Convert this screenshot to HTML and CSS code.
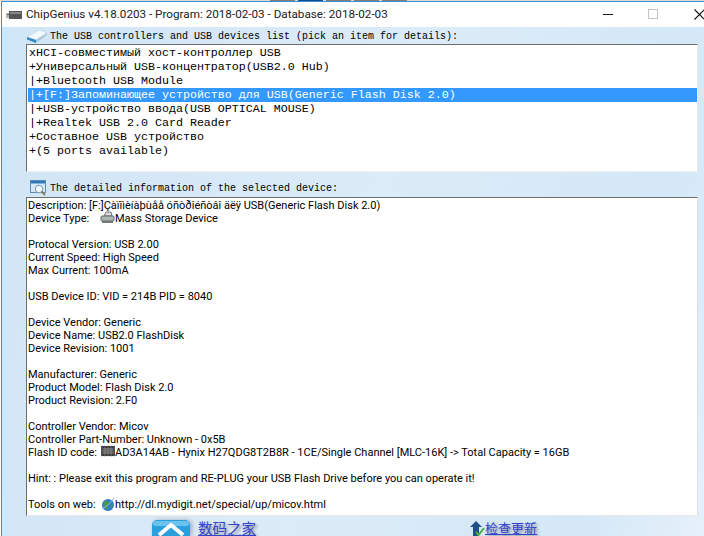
FILE: index.html
```html
<!DOCTYPE html>
<html lang="en">
<head>
<meta charset="utf-8">
<title>ChipGenius</title>
<link rel="stylesheet" href="styles.css">
</head>
<body>
<div class="taskstrip"><i class="seg"></i><i class="seg active"></i><i class="seg"></i><i class="seg"></i><i class="seg"></i></div>
<div class="window">
  <header class="titlebar">
    <svg class="appicon" width="16" height="10" viewBox="0 0 16 10"><rect x="0" y="3" width="3" height="5" fill="#b5b5b5"/><rect x="3" y="1" width="13" height="8" fill="#555"/><rect x="4" y="2" width="11" height="2" fill="#888"/><rect x="1" y="4" width="2" height="1" fill="#666"/></svg>
    <span class="title">ChipGenius v4.18.0203 - Program: 2018-02-03 - Database: 2018-02-03</span>
    <div class="controls">
      <span class="minimize"></span>
      <span class="maximize"></span>
      <svg class="close" width="11" height="11" viewBox="0 0 11 11"><path d="M0.5 .5 L10.5 10.5 M10.5 .5 L.5 10.5" stroke="#111" stroke-width="1.1" fill="none"/></svg>
    </div>
  </header>
  <main class="client">
    <div class="label first">
      <svg class="usbicon" width="22" height="14" viewBox="0 0 22 14"><path d="M1 8 L13 1 L21 4 L10 11 Z" fill="#f2f8fc" stroke="#c4dcec" stroke-width=".8"/><path d="M1 8 L10 11 L10 14 L1 10.500 Z" fill="#2f86c6"/><path d="M10 11 L21 4 L21 6 L10 14 Z" fill="#a9c8dc"/></svg>
      <span class="labeltext">The USB controllers and USB devices list (pick an item for details):</span>
    </div>
    <ul class="devices">
      <li>xHCI-совместимый хост-контроллер USB</li>
      <li>+Универсальный USB-концентратор(USB2.0 Hub)</li>
      <li>|+Bluetooth USB Module</li>
      <li class="selected">|+[F:]Запоминающее устройство для USB(Generic Flash Disk 2.0)</li>
      <li>|+USB-устройство ввода(USB OPTICAL MOUSE)</li>
      <li>|+Realtek USB 2.0 Card Reader</li>
      <li>+Составное USB устройство</li>
      <li>+(5 ports available)</li>
    </ul>
    <div class="label second">
      <svg class="infoicon" width="17" height="16" viewBox="0 0 17 16"><rect x=".5" y=".5" width="15" height="12" fill="#d6e8f5" stroke="#5b8db8"/><rect x="1" y="1" width="14" height="2.500" fill="#2f78b8"/><circle cx="9" cy="9" r="3.800" fill="#eef6fb" stroke="#7d9bb0"/><path d="M11.500 11.500 L15 15" stroke="#8a7a55" stroke-width="1.800"/></svg>
      <span class="labeltext">The detailed information of the selected device:</span>
    </div>
    <div class="details">
      <p>Description: [F:]Çàïîìèíàþùåå óñòðîéñòâî äëÿ USB(Generic Flash Disk 2.0)</p>
      <p><span class="key">Device Type:</span><svg class="inl" width="15" height="13" viewBox="0 0 15 13"><path d="M4 5 L6 1 H11 L12 5 Z" fill="#ddd" stroke="#777"/><rect x="1" y="5" width="13" height="5" rx="1" fill="#a9b5ad" stroke="#667"/><rect x="2" y="10" width="11" height="2" fill="#777"/></svg>Mass Storage Device</p>
      <p>&nbsp;</p>
      <p>Protocal Version: USB 2.00</p>
      <p>Current Speed: High Speed</p>
      <p>Max Current: 100mA</p>
      <p>&nbsp;</p>
      <p>USB Device ID: VID = 214B PID = 8040</p>
      <p>&nbsp;</p>
      <p>Device Vendor: Generic</p>
      <p>Device Name: USB2.0 FlashDisk</p>
      <p>Device Revision: 1001</p>
      <p>&nbsp;</p>
      <p>Manufacturer: Generic</p>
      <p>Product Model: Flash Disk 2.0</p>
      <p>Product Revision: 2.F0</p>
      <p>&nbsp;</p>
      <p>Controller Vendor: Micov</p>
      <p>Controller Part-Number: Unknown - 0x5B</p>
      <p><span class="key">Flash ID code:</span><svg class="inl" width="15" height="12" viewBox="0 0 15 12"><rect x="1" y="1" width="14" height="10" fill="#333"/><rect x="3" y="3" width="10" height="6" fill="#666"/><path d="M2 0V12M5 0V12M8 0V12M11 0V12M14 0V12" stroke="#999" stroke-width=".6"/></svg>AD3A14AB - Hynix H27QDG8T2B8R - 1CE/Single Channel [MLC-16K] -&gt; Total Capacity = 16GB</p>
      <p>&nbsp;</p>
      <p>Hint: : Please exit this program and RE-PLUG your USB Flash Drive before you can operate it!</p>
      <p>&nbsp;</p>
      <p><span class="key">Tools on web:</span><svg class="inl" width="15" height="15" viewBox="0 0 15 15"><circle cx="8" cy="8" r="6" fill="#2f7fc4"/><path d="M4 5 Q7 3 9 6 L7 9 L8 13 L5 11 Z" fill="#4c9a3a"/><path d="M10 9 L13 7 L12 11 Z" fill="#4c9a3a"/><path d="M2 12 Q9 9 14 1" stroke="#8fb8e0" fill="none"/></svg>http://dl.mydigit.net/special/up/micov.html</p>
    </div>
    <footer class="links">
      <div class="homelink">
        <svg class="home" width="38" height="16" viewBox="0 0 38 16"><rect x="0" y="0" width="38" height="30" rx="5" fill="#2b9fdc"/><rect x="1" y="1" width="36" height="5" rx="3" fill="#6cc4ee"/><path d="M7 15 L19 5 L31 15" fill="none" stroke="#fff" stroke-width="4"/></svg>
        <span class="cjk big">数码之家</span>
      </div>
      <div class="updatelink">
        <svg class="update" width="15" height="15" viewBox="0 0 15 15"><path d="M6 0 L12 6 H9 V15 H3 V6 H0 Z" fill="#1f4f86"/><path d="M6 11 L8.500 14 L14 7" stroke="#46b03a" stroke-width="2" fill="none"/></svg>
        <span class="cjk small">检查更新</span>
      </div>
    </footer>
  </main>
</div>
</body>
</html>
```
FILE: styles.css
```css
* { box-sizing: border-box; margin: 0; padding: 0; }
html, body { width: 704px; height: 536px; overflow: hidden; background: #fff; }
body { font-family: "Liberation Sans", sans-serif; color: #000; }

.taskstrip { display: flex; height: 1px; background: #dcdcdc; padding-left: 270px; }
.seg { display: block; height: 1px; width: 25px; margin-right: 3px; background: #7d7d7d; }
.active { background: #0f4f8f; }

.window { height: 535px; border-top: 1px solid #3d8fd0; border-left: 1px solid #3d8fd0; margin-left: 1px; display: flex; flex-direction: column; }

.titlebar { height: 25px; display: flex; align-items: center; background: #fff; padding-left: 4px; flex: none; }
.appicon { margin-right: 4px; }
.title { font: 11.7px/16px Roboto, sans-serif; color: #222; margin-bottom: 2px; }
.controls { margin-left: auto; display: flex; align-items: center; }
.minimize { width: 10px; height: 1px; background: #111; margin-right: 35px; }
.maximize { width: 10px; height: 10px; border: 1px solid #c4c4c4; margin-right: 36px; margin-bottom: 1px; }
.close { display: block; margin-right: -1px; margin-bottom: 1px; }

.client { flex: 1; padding: 0 6px 0 24px; background: linear-gradient(105deg, #d0e5f5 0%, #dcebf8 50%, #d4e8f7 85%, #e6f0fa 100%); display: flex; flex-direction: column; }

.label { display: flex; align-items: center; font: 10px/13px "Liberation Mono", monospace; height: 17px; }
.labeltext { margin-top: 2px; }
.usbicon { margin-right: 2px; flex: none; }
.infoicon { margin: 0 3px 0 4px; flex: none; }
.second { margin-top: 7px; height: 17px; }

.devices { list-style: none; height: 128px; background: #fff; border-style: solid; border-width: 1px; border-color: #6e6e6e #e8e8e8 #f0f0f0 #6e6e6e; padding: 1px 0 0 1px; font: 11.67px/14px "Liberation Mono", monospace; }
.devices li { height: 14px; padding-left: 1px; white-space: pre; }
.selected { background: #3399ff; color: #fff; }

.details { height: 319px; background: #fff; border-style: solid; border-width: 1px; border-color: #6e6e6e #e0e0e0 #e8e8e8 #6e6e6e; padding: 1px 0 0 1px; font: 11px/13px Roboto, sans-serif; overflow: hidden; margin-top: 1px; }
.details p { height: 13px; white-space: pre; }
.key { display: inline-block; width: 72px; }
.inl { vertical-align: top; margin: -1px 0 -3px; }

.links { position: relative; flex: 1; }
.homelink { position: absolute; left: 126px; top: 4px; display: flex; }
.home { display: block; margin-right: 8px; filter: drop-shadow(2px 0 2px #aab); }
.cjk { font-family: "Noto Sans CJK SC", sans-serif; color: #3344cc; text-decoration: underline; text-shadow: 2px 2px 3px #888; }
.big { font-size: 14.5px; line-height: 16px; }
.small { font-size: 13px; line-height: 14px; }
.updatelink { position: absolute; left: 444px; top: 5px; display: flex; }
.update { margin-right: 0; flex: none; }
```
